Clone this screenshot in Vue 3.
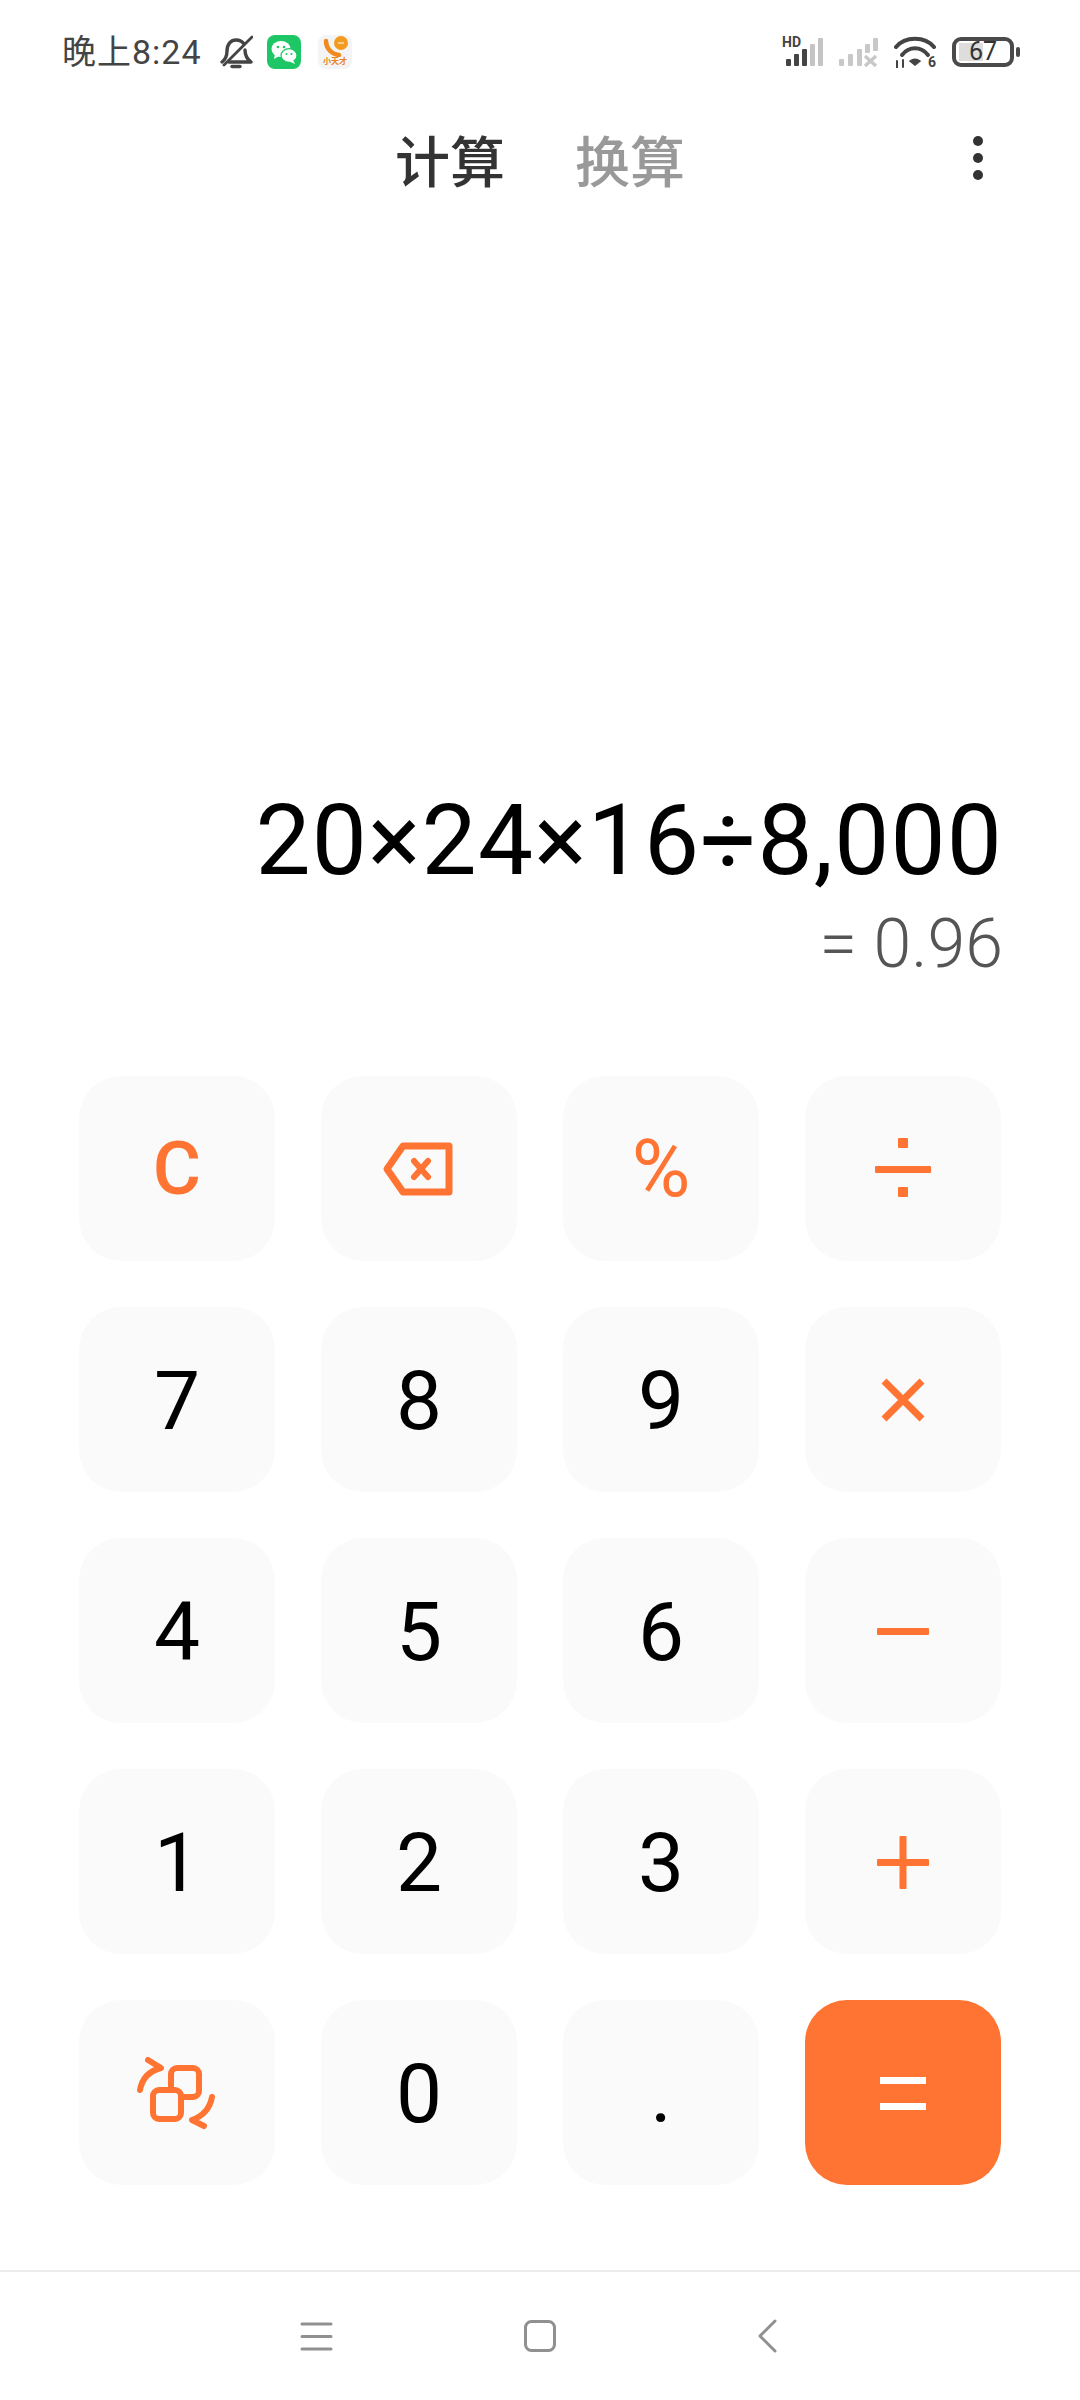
<script setup>
// rangées du clavier, dans l'ordre de l'écran
const keys = [
  { id: 'clear', text: 'C', cls: 'op-text clear' },
  { id: 'back', icon: true },
  { id: 'percent', text: '%', cls: 'op-text pct' },
  { id: 'div', icon: true },
  { id: '7', text: '7' },
  { id: '8', text: '8' },
  { id: '9', text: '9' },
  { id: 'mul', icon: true },
  { id: '4', text: '4' },
  { id: '5', text: '5' },
  { id: '6', text: '6' },
  { id: 'sub', icon: true },
  { id: '1', text: '1' },
  { id: '2', text: '2' },
  { id: '3', text: '3' },
  { id: 'add', icon: true },
  { id: 'swap', icon: true },
  { id: '0', text: '0' },
  { id: 'dot', text: '.' },
  { id: 'eq', icon: true, cls: 'primary' }
];

const signalA = [
  { x: 4, h: 7, c: '#444' },
  { x: 12, h: 12, c: '#444' },
  { x: 20, h: 17, c: '#444' },
  { x: 28, h: 22, c: '#c4c4c4' },
  { x: 36, h: 28, c: '#c4c4c4' }
];
const signalB = [
  { x: 1, y: 21, h: 7 },
  { x: 10, y: 16, h: 12 },
  { x: 19, y: 11, h: 17 },
  { x: 27, y: 6, h: 9 },
  { x: 35, y: 0, h: 13 }
];
</script>

<template>
  <div class="phone">
    <div class="status">
      <div class="status-left">
        <span class="time">晚上8:24</span>
        <svg class="bell" width="34" height="34" viewBox="0 0 34 34" fill="none" stroke="#444" stroke-width="3.400" stroke-linecap="round" stroke-linejoin="round">
          <path d="M3 27 C7 24 8 21 8 16 C8 9 12 5 17 5 C20 5 23 6 25 9" />
          <path d="M26 15 C26 21 28 24 32 27 L10 27" />
          <path d="M5 30 L33 2" stroke-width="2.800" />
          <path d="M13 31.500 H21" />
        </svg>
        <svg class="app" width="34" height="34" viewBox="0 0 34 34">
          <rect width="34" height="34" rx="8" fill="#1ec765" />
          <ellipse cx="14" cy="14" rx="9.500" ry="8" fill="#fff" />
          <path d="M8 19 L7 24 L12 21 Z" fill="#fff" />
          <ellipse cx="22" cy="20.500" rx="8" ry="6.800" fill="#fff" stroke="#1ec765" stroke-width="1.200" />
          <path d="M26 25 L28 29 L22.500 26.500 Z" fill="#fff" />
          <circle cx="11" cy="12" r="1.300" fill="#1ec765" />
          <circle cx="17" cy="12" r="1.300" fill="#1ec765" />
          <circle cx="19.500" cy="19" r="1.100" fill="#1ec765" />
          <circle cx="24.500" cy="19" r="1.100" fill="#1ec765" />
        </svg>
        <div class="app-tile">
          <svg width="33" height="22" viewBox="0 0 33 22" fill="none">
            <path d="M7 6 C7 13 12 19 20 20" stroke="#f08a1d" stroke-width="4.500" stroke-linecap="round" />
            <circle cx="22" cy="8" r="7" fill="#f39a1f" />
            <path d="M19 8 H25" stroke="#fff" stroke-width="1.200" />
          </svg>
          <span class="app-label">小天才</span>
        </div>
      </div>
      <div class="status-right">
        <div class="signal">
          <span class="hd">HD</span>
          <svg width="42" height="30" viewBox="0 0 42 30">
            <rect v-for="b in signalA" :key="b.x" :x="b.x" :y="29 - b.h" width="5" :height="b.h" rx="1" :fill="b.c" />
          </svg>
        </div>
        <svg class="signal-off" width="40" height="29" viewBox="0 0 40 29" fill="#c8c8c8">
          <rect v-for="b in signalB" :key="b.x" :x="b.x" :y="b.y" width="5" :height="b.h" rx="1" />
          <path d="M27 18 L38 28 M38 18 L27 28" stroke="#c8c8c8" stroke-width="3.400" />
        </svg>
        <div class="wifi">
          <svg width="42" height="32" viewBox="0 0 42 32" fill="none" stroke="#444" stroke-width="4" stroke-linecap="round">
            <path d="M2 11 C11 0 31 0 40 11" />
            <path d="M8 19 C15 10 27 10 34 19" />
            <path d="M16 25 C19 23 23 23 26 25 L21 29 Z" fill="#444" stroke-width="1.500" />
            <path d="M3 25 V32 M9 24 V31" stroke-width="2" />
          </svg>
          <span class="wifi-num">6</span>
        </div>
        <div class="battery">
          <div class="battery-level"></div>
          <span class="battery-text">67</span>
        </div>
        <div class="battery-nub"></div>
      </div>
    </div>

    <div class="tabs">
      <span class="tab active">计算</span>
      <span class="tab">换算</span>
      <div class="more"><i></i><i></i><i></i></div>
    </div>

    <div class="display">
      <div class="expr">20×24×16÷8,000</div>
      <div class="result">= 0.96</div>
    </div>

    <div class="keypad">
      <div v-for="k in keys" :key="k.id" class="key" :class="k.cls">
        <template v-if="k.text">{{ k.text }}</template>
        <svg v-else-if="k.id === 'back'" width="80" height="80" viewBox="0 0 80 80" fill="none" stroke="#ff7433" stroke-width="7" stroke-linejoin="round" stroke-linecap="round">
          <path d="M8 40 L24 17 H70 V63 H24 Z" />
          <path d="M35 32 L49 48 M49 32 L35 48" stroke-width="6" />
        </svg>
        <svg v-else-if="k.id === 'div'" width="80" height="80" viewBox="0 0 80 80" fill="#ff7433">
          <rect x="12" y="37" width="56" height="7" rx="1" />
          <rect x="35" y="9" width="10" height="10" rx="1" />
          <rect x="35" y="58" width="10" height="10" rx="1" />
        </svg>
        <svg v-else-if="k.id === 'mul'" width="80" height="80" viewBox="0 0 80 80" stroke="#ff7433" stroke-width="7">
          <path d="M21 21 L59 59 M59 21 L21 59" />
        </svg>
        <svg v-else-if="k.id === 'sub'" width="80" height="80" viewBox="0 0 80 80" fill="#ff7433">
          <rect x="14" y="37" width="52" height="7" rx="1" />
        </svg>
        <svg v-else-if="k.id === 'add'" width="80" height="80" viewBox="0 0 80 80" fill="#ff7433">
          <rect x="14" y="37" width="52" height="7" rx="1" />
          <rect x="36.500" y="14" width="7" height="53" rx="1" />
        </svg>
        <svg v-else-if="k.id === 'swap'" width="80" height="80" viewBox="0 0 80 80" fill="none" stroke="#ff7433" stroke-width="6" stroke-linecap="round" stroke-linejoin="round">
          <rect x="34" y="15" width="28" height="29" rx="6" />
          <rect x="16" y="37" width="28" height="29" rx="6" fill="#fafafa" />
          <path d="M3 37 C5 26 12 18 24 15 L11 7" />
          <path d="M75 44 C73 55 66 63 55 67 L67 73" />
        </svg>
        <svg v-else-if="k.id === 'eq'" width="80" height="80" viewBox="0 0 80 80" fill="#fff">
          <rect x="17" y="24" width="46" height="7" />
          <rect x="17" y="50" width="46" height="7" />
        </svg>
      </div>
    </div>

    <div class="navbar">
      <svg width="34" height="34" viewBox="0 0 34 34" stroke="#909090" stroke-width="3" stroke-linecap="round">
        <path d="M3 5 H32 M3 17.500 H32 M3 30 H32" />
      </svg>
      <svg width="34" height="34" viewBox="0 0 34 34" fill="none" stroke="#909090" stroke-width="3">
        <rect x="2.500" y="2.500" width="29" height="29" rx="6" />
      </svg>
      <svg width="34" height="34" viewBox="0 0 34 34" fill="none" stroke="#909090" stroke-width="3" stroke-linecap="round" stroke-linejoin="round">
        <path d="M28 2 L13 17 L28 32" />
      </svg>
    </div>
  </div>
</template>

<style>
html, body { margin: 0; background: #fff; }
</style>

<style scoped>
.phone {
  width: 1080px;
  height: 2400px;
  display: flex;
  flex-direction: column;
  background: #fff;
  font-family: Roboto, "Noto Sans CJK SC", sans-serif;
  overflow: hidden;
}

/* barre d'état */
.status {
  height: 104px;
  display: flex;
  justify-content: space-between;
  align-items: center;
  padding: 0 60px 0 62px;
  box-sizing: border-box;
}
.status-left, .status-right { display: flex; align-items: center; }
.time { font-size: 34px; color: #444; width: 157px; line-height: 34px; letter-spacing: 1px; }
.bell { margin-right: 14px; }
.app { margin-right: 17px; }
.app-tile {
  width: 34px;
  height: 34px;
  border-radius: 8px;
  background: #f4f4f4;
  display: flex;
  flex-direction: column;
  align-items: center;
  overflow: hidden;
}
.app-label { font-size: 8px; line-height: 10px; color: #e8851a; font-weight: 700; }
.signal { position: relative; width: 42px; height: 30px; margin-right: 14px; }
.hd {
  position: absolute;
  left: 0;
  top: -2px;
  font-size: 14px;
  line-height: 14px;
  font-weight: 700;
  color: #444;
}
.signal-off { margin-right: 16px; }
.wifi { position: relative; width: 42px; height: 32px; margin-right: 16px; }
.wifi-num {
  position: absolute;
  right: 0;
  bottom: 0;
  font-size: 14px;
  line-height: 12px;
  font-weight: 700;
  color: #444;
}
.battery {
  position: relative;
  width: 62px;
  height: 30px;
  box-sizing: border-box;
  border: 4px solid #4a4a4a;
  border-radius: 9px;
  display: flex;
  align-items: center;
  justify-content: center;
}
.battery-level {
  position: absolute;
  left: 3px;
  top: 2px;
  bottom: 2px;
  width: 24px;
  background: #ddd;
}
.battery-text { position: relative; font-size: 25px; line-height: 22px; color: #333; }
.battery-nub { width: 4px; height: 10px; margin-left: 2px; border-radius: 2px; background: #4a4a4a; }

/* onglets */
.tabs {
  position: relative;
  height: 112px;
  box-sizing: border-box;
  padding-top: 6px;
  display: flex;
  justify-content: center;
  align-items: center;
  gap: 70px;
}
.tab { font-size: 55px; line-height: 60px; color: #999; font-weight: 500; }
.tab.active { color: #333; }
.more {
  position: absolute;
  right: 97px;
  top: 32px;
  display: flex;
  flex-direction: column;
  gap: 7px;
}
.more i { display: block; width: 10px; height: 10px; border-radius: 50%; background: #333; }

/* affichage */
.display {
  flex: 1;
  display: flex;
  flex-direction: column;
  align-items: flex-end;
  justify-content: flex-end;
  padding: 0 80px 94px 0;
}
.expr {
  font-size: 98px;
  line-height: 112px;
  font-weight: 400;
  color: #000;
  letter-spacing: 1.200px;
  white-space: nowrap;
  margin-right: -3px;
}
.result {
  font-size: 68px;
  line-height: 76px;
  font-weight: 300;
  color: #555;
  margin-top: 9px;
  margin-right: -3px;
}

/* clavier */
.keypad {
  display: grid;
  grid-template-columns: repeat(4, 196px);
  grid-auto-rows: 185px;
  column-gap: 46px;
  row-gap: 46px;
  padding: 0 79px;
  margin-bottom: 85px;
}
.key {
  display: flex;
  align-items: center;
  justify-content: center;
  background: #fafafa;
  border-radius: 42px;
  font-size: 82px;
  font-weight: 400;
  color: #000;
  padding-top: 3px;
  box-sizing: border-box;
}
.key:has(svg) { padding-top: 0; }
.op-text { color: #ff7433; font-size: 76px; padding-top: 0; }
.clear { font-size: 74px; font-weight: 500; }
.pct { font-size: 80px; }
.primary { background: #ff7433; }

/* navigation */
.navbar {
  height: 130px;
  box-sizing: border-box;
  border-top: 2px solid #ececec;
  display: flex;
  align-items: center;
  justify-content: center;
  gap: 190px;
}
</style>
